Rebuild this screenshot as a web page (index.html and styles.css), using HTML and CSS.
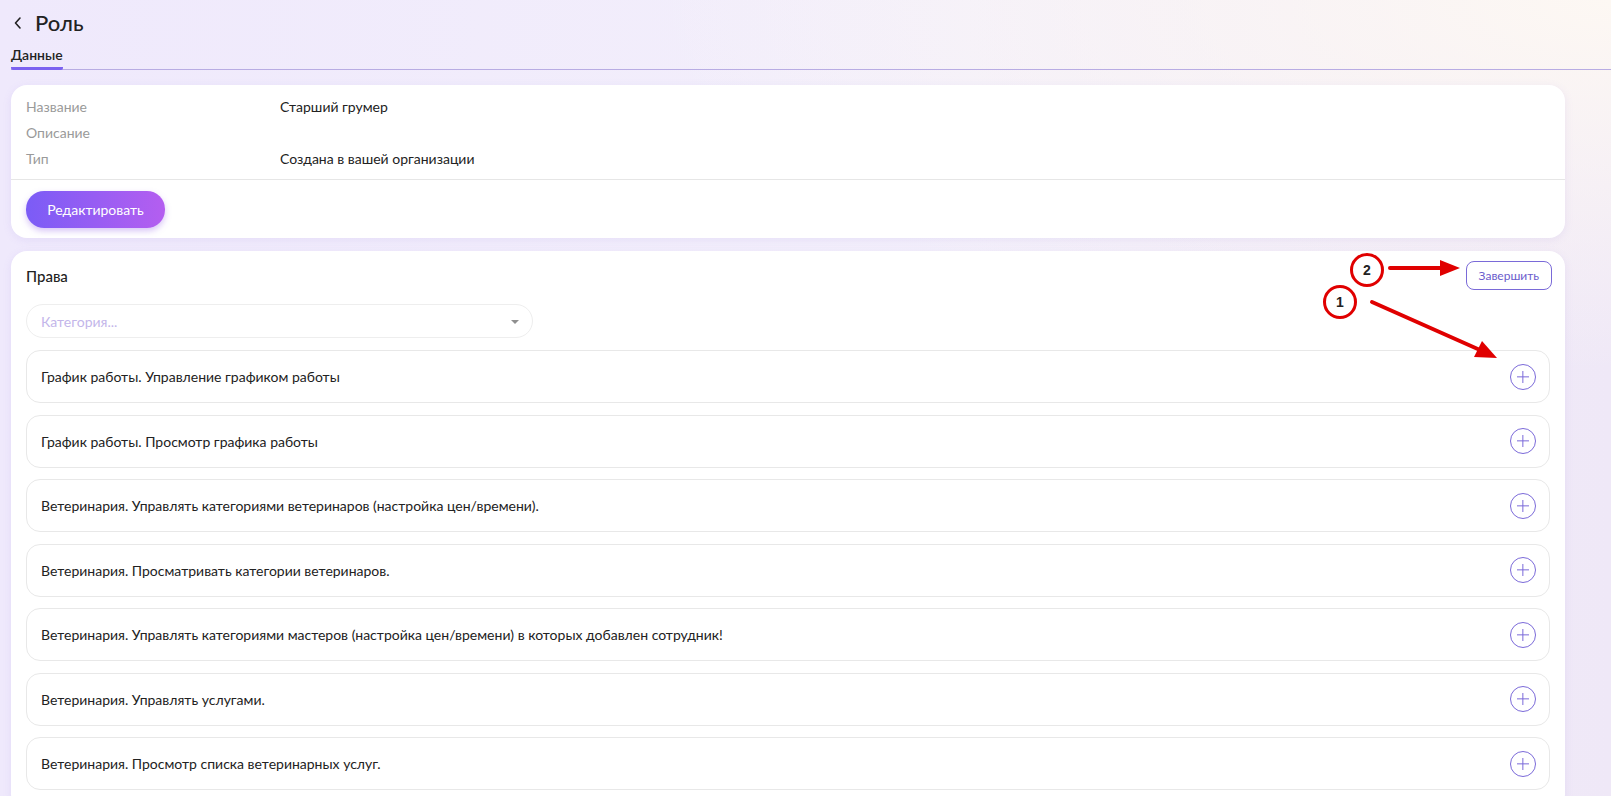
FILE: index.html
```html
<!DOCTYPE html>
<html lang="ru">
<head>
  <meta charset="UTF-8">
  <meta name="viewport" content="width=device-width, initial-scale=1.0">
  <title>Роль</title>
  <link rel="stylesheet" href="styles.css">
</head>
<body>
  <div class="page">
    <div class="header">
      <div class="title-row">
        <svg class="back" width="10" height="14" viewBox="0 0 10 14"><path d="M7 2 L2.5 7 L7 12" fill="none" stroke="#222" stroke-width="1.6" stroke-linecap="round" stroke-linejoin="round"/></svg>
        <h1>Роль</h1>
      </div>
      <div class="tabs">
        <div class="tab active">Данные</div>
      </div>
    </div>

    <div class="card info">
      <div class="fields">
        <div class="field"><span class="label">Название</span><span class="val">Старший грумер</span></div>
        <div class="field"><span class="label">Описание</span><span class="val"></span></div>
        <div class="field"><span class="label">Тип</span><span class="val">Создана в вашей организации</span></div>
      </div>
      <div class="actions">
        <button class="btn-primary">Редактировать</button>
      </div>
    </div>

    <div class="card rights">
      <div class="rights-head">
        <h3>Права</h3>
        <button class="btn-outline">Завершить</button>
      </div>
      <div class="select">
        <span class="placeholder">Категория...</span>
        <span class="caret"></span>
      </div>
      <div class="list">
        <div class="item"><span>График работы. Управление графиком работы</span><span class="plus"></span></div>
        <div class="item"><span>График работы. Просмотр графика работы</span><span class="plus"></span></div>
        <div class="item"><span>Ветеринария. Управлять категориями ветеринаров (настройка цен/времени).</span><span class="plus"></span></div>
        <div class="item"><span>Ветеринария. Просматривать категории ветеринаров.</span><span class="plus"></span></div>
        <div class="item"><span>Ветеринария. Управлять категориями мастеров (настройка цен/времени) в которых добавлен сотрудник!</span><span class="plus"></span></div>
        <div class="item"><span>Ветеринария. Управлять услугами.</span><span class="plus"></span></div>
        <div class="item"><span>Ветеринария. Просмотр списка ветеринарных услуг.</span><span class="plus"></span></div>
      </div>
    </div>
  </div>

  <!-- пометки поверх скриншота -->
  <svg class="marks" width="1611" height="796" viewBox="0 0 1611 796">
    <g fill="none" stroke="#e00000" stroke-width="3">
      <circle cx="1367" cy="270" r="15.5"/>
      <circle cx="1340" cy="302" r="15.5"/>
    </g>
    <g stroke="#e00000" stroke-width="4" stroke-linecap="round">
      <line x1="1390" y1="268" x2="1445" y2="268"/>
      <line x1="1372" y1="302" x2="1480" y2="350"/>
    </g>
    <g fill="#e00000">
      <polygon points="1460,268 1440,260 1440,276"/>
      <polygon points="1497,358 1474,357 1482,341"/>
    </g>
    <text x="1367" y="275" class="mark-num">2</text>
    <text x="1340" y="307" class="mark-num">1</text>
  </svg>
</body>
</html>
```

FILE: styles.css
```css
body {
  margin: 0;
  font-family: Lato, "Noto Sans", sans-serif;
  color: #222;
  background:
    radial-gradient(ellipse 60% 45% at 100% 0%, #fdf8f3 0%, rgba(253, 248, 243, 0) 100%),
    linear-gradient(90deg, #efe9fc 0%, #f3effb 60%, #efe8f7 100%);
  min-height: 100vh;
  overflow: hidden;
}

.page {
  padding: 0 46px 20px 11px;
}

.header {
  margin-right: -46px;
  border-bottom: 1px solid #b8ace3;
}

.title-row {
  display: flex;
  align-items: center;
  gap: 12px;
  height: 44px;
  padding-left: 2px;
}

.back {
  margin-top: 2px;
}

h1 {
  margin: 0;
  font-size: 22px;
  font-weight: 500;
}

.tabs {
  display: flex;
}

.tab {
  font-size: 14px;
  font-weight: 600;
  padding: 2px 0 4px;
  border-bottom: 3px solid transparent;
  margin-bottom: -1px;
}

.tab.active {
  border-bottom-color: #7b61f0;
  border-radius: 2px;
}

.card {
  background: #fff;
  border-radius: 16px;
  box-shadow: 0 2px 8px rgba(150, 120, 220, 0.12);
}

.info {
  margin-top: 15px;
}

.fields {
  padding: 8px 15px;
  border-bottom: 1px solid #e6e6e6;
}

.field {
  display: flex;
  height: 26px;
  align-items: center;
  font-size: 14px;
}

.label {
  width: 254px;
  color: #9a9a9a;
}

.actions {
  padding: 11px 15px 10px;
}

.btn-primary {
  border: 0;
  height: 37px;
  width: 139px;
  border-radius: 18px;
  background: linear-gradient(90deg, #7b5cf6, #b45ef0);
  color: #fff;
  font-family: inherit;
  font-size: 14px;
  box-shadow: 0 3px 6px rgba(140, 90, 230, 0.35);
}

.rights {
  margin-top: 13px;
  padding: 10px 15px 20px;
}

.rights-head {
  display: flex;
  justify-content: space-between;
  align-items: center;
}

h3 {
  margin: 0;
  font-size: 15px;
  font-weight: 500;
}

.btn-outline {
  height: 29px;
  padding: 0 12px;
  border: 1px solid #7a6ad8;
  border-radius: 8px;
  background: #fff;
  color: #6b5ccc;
  font-family: inherit;
  font-size: 12px;
  margin-right: -2px;
}

.select {
  margin-top: 14px;
  width: 507px;
  height: 34px;
  border: 1px solid #eeeeee;
  border-radius: 17px;
  display: flex;
  align-items: center;
  justify-content: space-between;
  padding: 0 13px 0 14px;
  box-sizing: border-box;
}

.placeholder {
  color: #c3b6ea;
  font-size: 14px;
}

.caret {
  width: 0;
  height: 0;
  border-left: 4px solid transparent;
  border-right: 4px solid transparent;
  border-top: 4px solid #8f8f8f;
  margin-top: 2px;
}

.list {
  margin-top: 12px;
  display: flex;
  flex-direction: column;
  gap: 11.5px;
}

.item {
  height: 53px;
  box-sizing: border-box;
  border: 1px solid #e8e8e8;
  border-radius: 14px;
  display: flex;
  align-items: center;
  justify-content: space-between;
  padding: 0 13px 0 14px;
  font-size: 14px;
}

.plus {
  width: 24px;
  height: 24px;
  border: 1px solid #7b6ad9;
  border-radius: 50%;
  position: relative;
}

.plus::before,
.plus::after {
  content: "";
  position: absolute;
  background: #7b6ad9;
  left: 50%;
  top: 50%;
  transform: translate(-50%, -50%);
}

.plus::before {
  width: 12px;
  height: 1.3px;
}

.plus::after {
  width: 1.3px;
  height: 12px;
}

.marks {
  position: absolute;
  left: 0;
  top: 0;
  pointer-events: none;
}

.mark-num {
  font-family: "Liberation Sans", sans-serif;
  font-weight: bold;
  font-size: 14px;
  fill: #222;
  text-anchor: middle;
}
```
